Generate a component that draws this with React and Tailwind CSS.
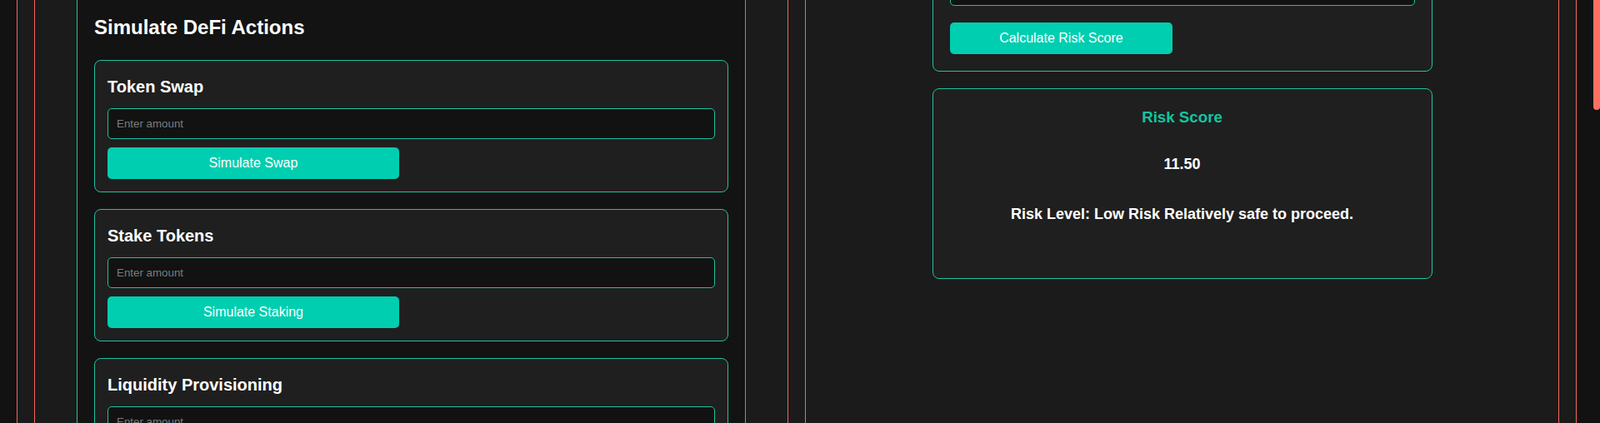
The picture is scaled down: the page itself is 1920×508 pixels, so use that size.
const TEAL_BORDER = 'border-[#20c19e]';

function ActionCard({ title, action }) {
  return (
    <div className={`mb-5 rounded-lg border ${TEAL_BORDER} bg-[#1f1f1f] px-[15px] pt-5 pb-[15px]`}>
      <h3 className="mb-[14px] text-[20px] leading-[23px] font-bold text-white">{title}</h3>
      <input
        type="text"
        placeholder="Enter amount"
        className="block h-[37px] w-full rounded-[5px] border border-[#20c19e] bg-[#121212] px-[10px] text-[13.33px] text-white outline-none placeholder:text-[#7c7c7c]"
      />
      <button className="mt-[10px] h-[38px] w-[48%] rounded-[5px] bg-[#00ceb0] text-[16px] text-white">
        {action}
      </button>
    </div>
  );
}

export default function App() {
  return (
    <div className="flex h-[508px] overflow-hidden bg-[#121212] font-['Liberation_Sans',Arial,sans-serif]">
      <div className="flex-1 px-5">
        {/* page is scrolled: top of the container sits above the viewport */}
        <div className="-mt-[131px] grid grid-cols-2 gap-5 border border-[#f0695c] bg-[#1b1b1b] p-5">
          {/* left column: DeFi simulation */}
          <div className="border border-[#f0695c] pt-[107px]">
            <section className={`mx-auto w-[803px] border ${TEAL_BORDER} bg-[#131313] p-5`}>
              <h2 className="mb-[25px] text-[24px] leading-[28px] font-bold text-white">Simulate DeFi Actions</h2>
              <ActionCard title="Token Swap" action="Simulate Swap" />
              <ActionCard title="Stake Tokens" action="Simulate Staking" />
              <ActionCard title="Liquidity Provisioning" action="Simulate Liquidity" />
            </section>
          </div>

          {/* right column: risk calculator */}
          <div className="border border-[#f0695c] pt-[21px]">
            <div className={`mx-auto w-[600px] rounded-lg border ${TEAL_BORDER} bg-[#1f1f1f] px-5 pt-5 pb-5`}>
              <h3 className="mb-[14px] text-[20px] leading-[23px] font-bold text-white">Risk Calculator</h3>
              <input
                type="text"
                placeholder="Enter transaction amount"
                className="block h-[37px] w-full rounded-[5px] border border-[#20c19e] bg-[#121212] px-[10px] text-[13.33px] text-white outline-none placeholder:text-[#7c7c7c]"
              />
              <button className="mt-5 h-[38px] w-[48%] rounded-[5px] bg-[#00ceb0] text-[16px] text-white">
                Calculate Risk Score
              </button>
            </div>

            <div className={`mx-auto mt-5 w-[600px] rounded-lg border ${TEAL_BORDER} bg-[#1f1f1f] px-5 pt-[23px] pb-[66px] text-center`}>
              <h3 className="text-[18.72px] leading-[22px] font-bold text-[#14c4a0]">Risk Score</h3>
              <p className="mt-[35px] text-[18px] leading-[21px] font-bold text-white">11.50</p>
              <p className="mt-[39px] text-[18px] leading-[21px] font-bold text-white">
                Risk Level: Low Risk Relatively safe to proceed.
              </p>
            </div>
          </div>
        </div>
      </div>

      {/* scrollbar */}
      <div className="w-2 bg-[#121212]">
        <div className="h-[132px] rounded-b-[4px] bg-[#ff6f61]" />
      </div>
    </div>
  );
}
